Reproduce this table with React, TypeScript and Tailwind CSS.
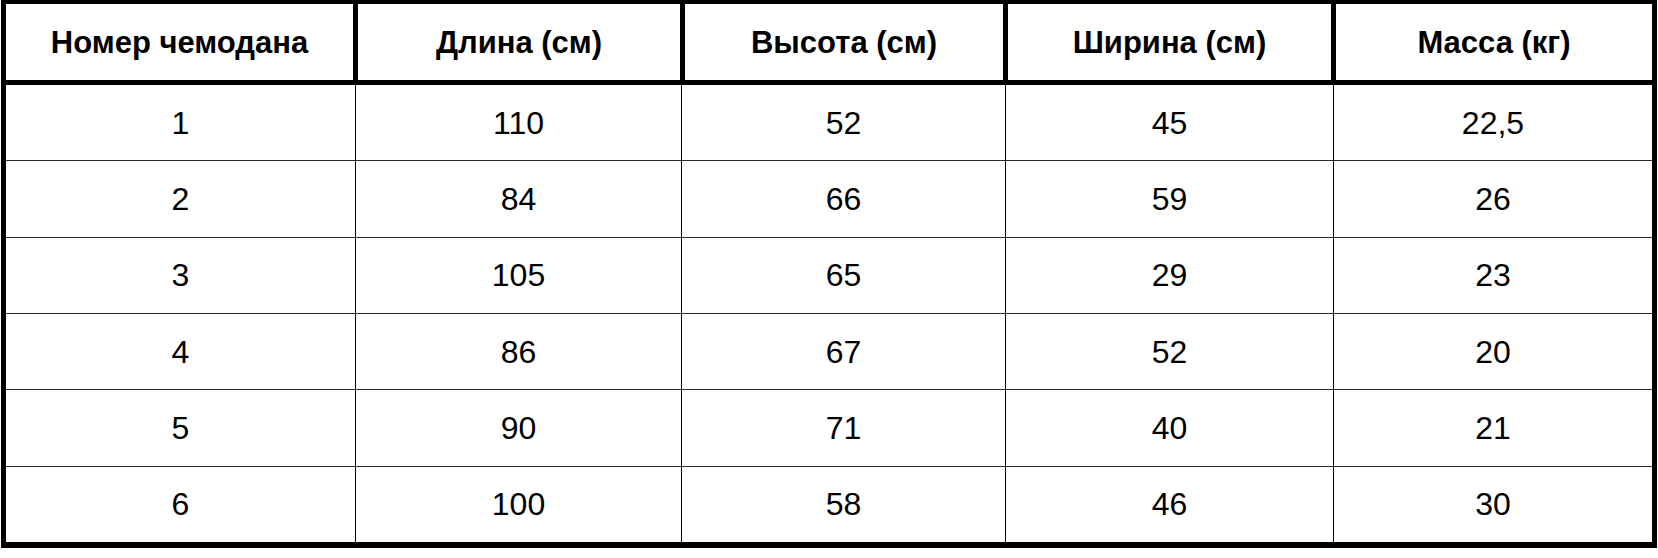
import React from 'react';

const HEADERS = ['Номер чемодана', 'Длина (см)', 'Высота (см)', 'Ширина (см)', 'Масса (кг)'];

const ROWS = [
  ['1', '110', '52', '45', '22,5'],
  ['2', '84', '66', '59', '26'],
  ['3', '105', '65', '29', '23'],
  ['4', '86', '67', '52', '20'],
  ['5', '90', '71', '40', '21'],
  ['6', '100', '58', '46', '30'],
];

// header cells carry the thick dividers, body cells the thin ones
const headWidths = ['w-[352px]', 'w-[327px]', 'w-[323px]', 'w-[328px]', 'flex-1'];
const bodyWidths = ['w-[350px]', 'w-[326px]', 'w-[324px]', 'w-[328px]', 'flex-1'];

export default function App() {
  return (
    <div className="w-[1658px] h-[558px] bg-white pl-[1px]" style={{ fontFamily: '"Liberation Sans", Arial, sans-serif' }}>
      <div className="w-[1656px] h-[548px] flex flex-col border-black border-x-[5px] border-t-[4px] border-b-[6px]">
        <div className="h-[81px] flex border-b-[5px] border-black">
          {HEADERS.map((h, i) => (
            <div
              key={h}
              className={`${headWidths[i]} flex items-center justify-center pt-[2px] text-[31px] font-bold text-black ${i < 4 ? 'border-r-[5px] border-black' : ''}`}
            >
              {h}
            </div>
          ))}
        </div>
        <div className="flex-1 flex flex-col">
          {ROWS.map((row, r) => (
            <div key={r} className={`flex-1 flex ${r < ROWS.length - 1 ? 'border-b border-[#2a2a2a]' : ''}`}>
              {row.map((cell, i) => (
                <div
                  key={i}
                  className={`${bodyWidths[i]} flex items-center justify-center text-[32px] text-black ${i < 4 ? 'border-r border-black' : ''}`}
                >
                  {cell}
                </div>
              ))}
            </div>
          ))}
        </div>
      </div>
    </div>
  );
}
